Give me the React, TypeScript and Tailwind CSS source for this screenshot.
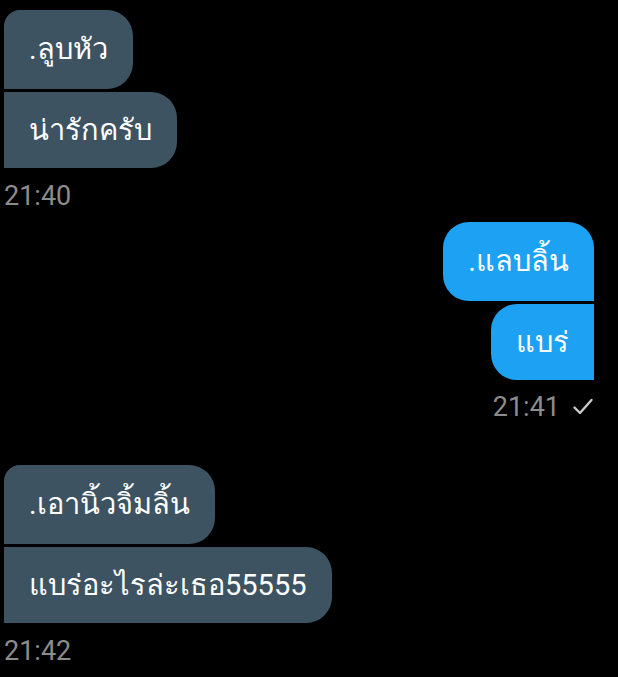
import React from 'react';

type Msg = { text: string; pos: 'first' | 'last' };

const font = { fontFamily: 'Roboto, "Noto Sans", "DejaVu Sans", sans-serif' };

const Check = () => (
  <svg className="h-[22px] w-[22px] text-[#c8c8c8]" viewBox="0 0 22 22" fill="none" aria-hidden="true">
    <path d="M2.5 11.5l5.5 5.5 11.5-13" stroke="currentColor" strokeWidth="2.4" strokeLinecap="round" strokeLinejoin="round" />
  </svg>
);

const Incoming: React.FC<{ messages: Msg[]; time: string }> = ({ messages, time }) => (
  <div className="flex flex-col items-start">
    <div className="flex flex-col items-start gap-[3px]">
      {messages.map((m, i) => (
        <div
          key={i}
          className={
            m.pos === 'first'
              ? 'rounded-tl-[16px] rounded-tr-[26px] rounded-br-[26px] rounded-bl-none bg-[#3e5362] px-[25px] py-[20px] text-[29px] leading-[39px] text-white'
              : 'rounded-tl-none rounded-tr-[26px] rounded-br-[26px] rounded-bl-none bg-[#3e5362] px-[25px] py-[18.5px] text-[29px] leading-[39px] text-white'
          }
        >
          {m.text}
        </div>
      ))}
    </div>
    <div className="mt-[11px] text-[27px] leading-[34px] text-[#8c8c8c]">{time}</div>
  </div>
);

const Outgoing: React.FC<{ messages: Msg[]; time: string }> = ({ messages, time }) => (
  <div className="flex flex-col items-end">
    <div className="flex flex-col items-end gap-[3px]">
      {messages.map((m, i) => (
        <div
          key={i}
          className={
            m.pos === 'first'
              ? 'rounded-tl-[26px] rounded-tr-[26px] rounded-br-none rounded-bl-[26px] bg-[#1da1f2] px-[25px] py-[20px] text-[29px] leading-[39px] text-white'
              : 'rounded-tl-[26px] rounded-tr-none rounded-br-none rounded-bl-[26px] bg-[#1da1f2] px-[25px] py-[18.5px] text-[29px] leading-[39px] text-white'
          }
        >
          {m.text}
        </div>
      ))}
    </div>
    <div className="mt-[10px] flex items-center gap-[12px] text-[27px] leading-[34px] text-[#8c8c8c]">
      <span>{time}</span>
      <Check />
    </div>
  </div>
);

export default function App() {
  return (
    <div className="h-[677px] w-[618px] overflow-hidden bg-black pl-[4px] pr-[24px] pt-[10px]" style={font}>
      <Incoming
        messages={[
          { text: '.ลูบหัว', pos: 'first' },
          { text: 'น่ารักครับ', pos: 'last' },
        ]}
        time="21:40"
      />
      <div className="mt-[9px]">
        <Outgoing
          messages={[
            { text: '.แลบลิ้น', pos: 'first' },
            { text: 'แบร่', pos: 'last' },
          ]}
          time="21:41"
        />
      </div>
      <div className="mt-[41px]">
        <Incoming
          messages={[
            { text: '.เอานิ้วจิ้มลิ้น', pos: 'first' },
            { text: 'แบร่อะไรล่ะเธอ55555', pos: 'last' },
          ]}
          time="21:42"
        />
      </div>
    </div>
  );
}
